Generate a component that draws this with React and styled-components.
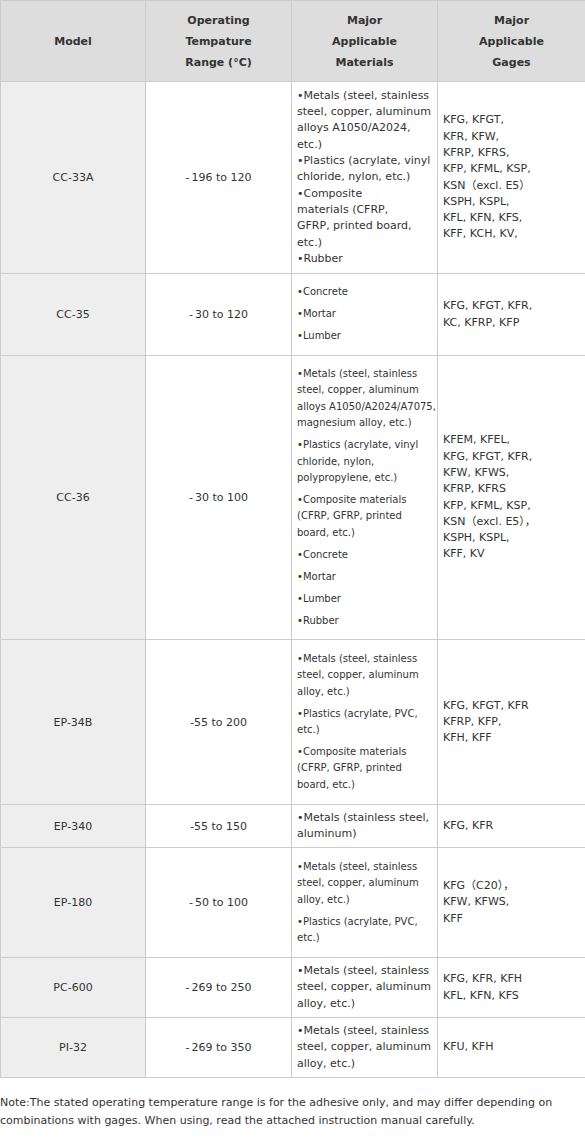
import styled, { createGlobalStyle } from 'styled-components'

const GlobalStyle = createGlobalStyle`
  body {
    margin: 0;
    background: #fff;
    font-family: "DejaVu Sans", Verdana, "Noto Sans CJK SC", sans-serif;
    color: #333;
  }
`

const Table = styled.table`
  width: 585px;
  border-collapse: collapse;
  table-layout: fixed;
  font-size: 11px;
  td, th {
    border: 1px solid #cccccc;
    vertical-align: middle;
  }
`

const HeadCell = styled.th`
  background: #dddddd;
  font-weight: bold;
  line-height: 21px;
  text-align: center;
  padding: 0 4px;
  height: 80px;
`

const ModelCell = styled.td`
  background: #eeeeee;
  text-align: center;
  padding: 0 4px;
  height: ${p => p.$h}px;
`

const TempCell = styled.td`
  text-align: center;
  padding: 0 4px;
`

const TextCell = styled.td`
  text-align: left;
  padding: 0 4px 0 ${p => p.$pl}px;
  line-height: 16.3px;
  white-space: nowrap;
`

const Para = styled.p`
  margin: 0;
  font-size: ${p => (p.$small ? 10 : 11)}px;
  line-height: ${p => (p.$small ? 16.4 : 16.3)}px;
  & + & {
    margin-top: ${p => (p.$small ? 5.6 : 0)}px;
  }
`

const Note = styled.p`
  margin: 16px 0 0;
  font-size: 11px;
  line-height: 17.5px;
`

const metals = ['•Metals (steel, stainless', 'steel, copper, aluminum', 'alloy, etc.)']

// "－" in the source text renders as a short dash followed by a gap
const minus = '-\u2009'

const rows = [
  {
    model: 'CC-33A', temp: `${minus}196 to 120`, h: 191, small: false,
    materials: [[
      '•Metals (steel, stainless', 'steel, copper, aluminum', 'alloys A1050/A2024,', 'etc.)',
      '•Plastics (acrylate, vinyl', 'chloride, nylon, etc.)', '•Composite', 'materials (CFRP,',
      'GFRP, printed board,', 'etc.)', '•Rubber',
    ]],
    gages: ['KFG, KFGT,', 'KFR, KFW,', 'KFRP, KFRS,', 'KFP, KFML, KSP,', 'KSN（excl. E5）', 'KSPH, KSPL,', 'KFL, KFN, KFS,', 'KFF, KCH, KV,'],
  },
  {
    model: 'CC-35', temp: `${minus}30 to 120`, h: 81, small: true,
    materials: [['•Concrete'], ['•Mortar'], ['•Lumber']],
    gages: ['KFG, KFGT, KFR,', 'KC, KFRP, KFP'],
  },
  {
    model: 'CC-36', temp: `${minus}30 to 100`, h: 283, small: true,
    materials: [
      ['•Metals (steel, stainless', 'steel, copper, aluminum', 'alloys A1050/A2024/A7075,', 'magnesium alloy, etc.)'],
      ['•Plastics (acrylate, vinyl', 'chloride, nylon,', 'polypropylene, etc.)'],
      ['•Composite materials', '(CFRP, GFRP, printed', 'board, etc.)'],
      ['•Concrete'], ['•Mortar'], ['•Lumber'], ['•Rubber'],
    ],
    gages: ['KFEM, KFEL,', 'KFG, KFGT, KFR,', 'KFW, KFWS,', 'KFRP, KFRS', 'KFP, KFML, KSP,', 'KSN（excl. E5），', 'KSPH, KSPL,', 'KFF, KV'],
  },
  {
    model: 'EP-34B', temp: '-55 to 200', h: 164, small: true,
    materials: [
      metals,
      ['•Plastics (acrylate, PVC,', 'etc.)'],
      ['•Composite materials', '(CFRP, GFRP, printed', 'board, etc.)'],
    ],
    gages: ['KFG, KFGT, KFR', 'KFRP, KFP,', 'KFH, KFF'],
  },
  {
    model: 'EP-340', temp: '-55 to 150', h: 42, small: false,
    materials: [['•Metals (stainless steel,', 'aluminum)']],
    gages: ['KFG, KFR'],
  },
  {
    model: 'EP-180', temp: `${minus}50 to 100`, h: 109, small: true,
    materials: [metals, ['•Plastics (acrylate, PVC,', 'etc.)']],
    gages: ['KFG（C20），', 'KFW, KFWS,', 'KFF'],
  },
  {
    model: 'PC-600', temp: `${minus}269 to 250`, h: 59, small: false,
    materials: [metals],
    gages: ['KFG, KFR, KFH', 'KFL, KFN, KFS'],
  },
  {
    model: 'PI-32', temp: `${minus}269 to 350`, h: 59, small: false,
    materials: [metals],
    gages: ['KFU, KFH'],
  },
]

function Lines({ lines }) {
  return lines.map((line, i) => (
    <span key={i}>
      {line}
      {i < lines.length - 1 && <br />}
    </span>
  ))
}

export default function App() {
  return (
    <>
      <GlobalStyle />
      <Table>
        <colgroup>
          <col style={{ width: 145 }} />
          <col style={{ width: 146 }} />
          <col style={{ width: 146 }} />
          <col style={{ width: 148 }} />
        </colgroup>
        <thead>
          <tr>
            <HeadCell>Model</HeadCell>
            <HeadCell>Operating<br />Tempature<br />Range (°C)</HeadCell>
            <HeadCell>Major<br />Applicable<br />Materials</HeadCell>
            <HeadCell>Major<br />Applicable<br />Gages</HeadCell>
          </tr>
        </thead>
        <tbody>
          {rows.map(row => (
            <tr key={row.model}>
              <ModelCell $h={row.h}>{row.model}</ModelCell>
              <TempCell>{row.temp}</TempCell>
              <TextCell $pl={5}>
                {row.materials.map((p, i) => (
                  <Para key={i} $small={row.small}>
                    <Lines lines={p} />
                  </Para>
                ))}
              </TextCell>
              <TextCell $pl={5}>
                <Para>
                  <Lines lines={row.gages} />
                </Para>
              </TextCell>
            </tr>
          ))}
        </tbody>
      </Table>
      <Note>
        Note:The stated operating temperature range is for the adhesive only, and may differ depending on<br />
        combinations with gages. When using, read the attached instruction manual carefully.
      </Note>
    </>
  )
}
